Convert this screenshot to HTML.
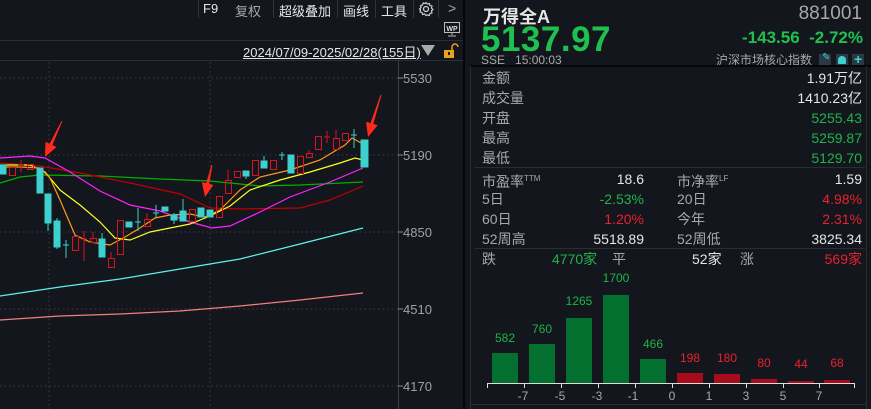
<!DOCTYPE html>
<html><head><meta charset="utf-8"><style>
*{margin:0;padding:0;box-sizing:border-box}
body{width:871px;height:409px;background:#13161c;overflow:hidden;position:relative;font-family:"Liberation Sans","Noto Sans CJK SC",sans-serif;color:#c8c8c8}
.a{position:absolute;white-space:nowrap}
.g{color:#1fb34a}.r{color:#e8212e}.w{color:#e6e6e6}.gr{color:#a8a8a8}
.row{position:absolute;left:482px;width:380px;height:20px;font-size:14px;line-height:20px}
.row span{position:absolute}
</style></head><body>
<!-- top menu -->
<div class="a" style="left:198px;top:0;width:1px;height:18px;background:#333"></div>
<div class="a w" style="left:203px;top:1px;font-size:13px">F9</div>
<div class="a gr" style="left:235px;top:1px;font-size:13px">复权</div>
<div class="a" style="left:273px;top:0;width:1px;height:18px;background:#333"></div>
<div class="a w" style="left:279px;top:1px;font-size:13px">超级叠加</div>
<div class="a" style="left:337px;top:0;width:1px;height:18px;background:#333"></div>
<div class="a w" style="left:343px;top:1px;font-size:13px">画线</div>
<div class="a" style="left:375px;top:0;width:1px;height:18px;background:#333"></div>
<div class="a w" style="left:381px;top:1px;font-size:13px">工具</div>
<div class="a" style="left:413px;top:0;width:1px;height:18px;background:#333"></div>
<div class="a" style="left:438px;top:0;width:1px;height:18px;background:#333"></div>
<svg class="a" style="left:418px;top:1px" width="16" height="16" viewBox="0 0 16 16"><circle cx="8" cy="8" r="2.5" fill="none" stroke="#ccc" stroke-width="1.3"/><path d="M8 1.5l1.4 1.6 2-.6.6 2 2 .6-.6 2 1.6 1.4-1.6 1.4.6 2-2 .6-.6 2-2-.6L8 14.5l-1.4-1.6-2 .6-.6-2-2-.6.6-2L1.5 8l1.6-1.4-.6-2 2-.6.6-2 2 .6z" fill="none" stroke="#ccc" stroke-width="1.2"/></svg>
<div class="a gr" style="left:448px;top:0px;font-size:14px">&gt;</div>
<div class="a" style="left:463px;top:0;width:2px;height:409px;background:#050608"></div>
<!-- WP -->
<svg class="a" style="left:444px;top:22px" width="16" height="15"><rect x="0.5" y="0.5" width="15" height="10" fill="none" stroke="#bbb"/><text x="8" y="9" font-size="7" fill="#ddd" text-anchor="middle" font-family="Liberation Sans" font-weight="bold">WP</text><path d="M8 11v2M4 14h8" stroke="#bbb"/></svg>
<div class="a" style="left:0;top:40px;width:463px;height:1px;background:#2a2d33"></div>
<div class="a w" style="left:243px;top:42px;font-size:13px;text-decoration:underline">2024/07/09-2025/02/28(155日)</div>
<svg class="a" style="left:421px;top:45px" width="14" height="11"><path d="M0 0h14L7 11z" fill="#aaa"/></svg>
<svg class="a" style="left:443px;top:43px" width="16" height="16"><path d="M9 7V4a3 3 0 0 1 6 0" fill="none" stroke="#e8a317" stroke-width="1.5"/><rect x="1" y="7" width="10" height="8" fill="#e8a317"/><rect x="5" y="9" width="2" height="3" fill="#13161c"/></svg>
<div class="a" style="left:0;top:60px;width:463px;height:1px;background:#2a2d33"></div>
<!-- chart -->
<svg class="a" style="left:0;top:61px" width="463" height="348" viewBox="0 61 463 348">
<g stroke="#3a3d44" stroke-dasharray="1.5,3" stroke-width="1">
<line x1="0" y1="78" x2="398" y2="78"/><line x1="0" y1="155" x2="398" y2="155"/><line x1="0" y1="232" x2="398" y2="232"/><line x1="0" y1="309" x2="398" y2="309"/><line x1="0" y1="386" x2="398" y2="386"/>
<line x1="49" y1="62" x2="49" y2="409"/><line x1="210" y1="62" x2="210" y2="409"/></g>
<line x1="398.5" y1="61" x2="398.5" y2="409" stroke="#3a3d44"/>
<g stroke="#888"><line x1="398" y1="78" x2="403" y2="78"/><line x1="398" y1="155" x2="403" y2="155"/><line x1="398" y1="232" x2="403" y2="232"/><line x1="398" y1="309" x2="403" y2="309"/><line x1="398" y1="386" x2="403" y2="386"/></g>
<g fill="#a0a0a0" font-size="13" font-family="Liberation Sans"><text x="403" y="83">5530</text><text x="403" y="160">5190</text><text x="403" y="237">4850</text><text x="403" y="314">4510</text><text x="403" y="391">4170</text></g>
<!-- long MAs -->
<polyline fill="none" stroke="#f08080" stroke-width="1.2" points="0,320 60,316 120,314 180,311 240,306 300,300 363,293"/>
<polyline fill="none" stroke="#5ff0f0" stroke-width="1.2" points="0,296 60,287 120,279 180,269 240,259 300,244 363,228"/>
<polyline fill="none" stroke="#00b000" stroke-width="1.2" points="0,183 20,177 40,175 100,176 160,179 210,181 260,186 300,185 363,182"/>
<polyline fill="none" stroke="#c00000" stroke-width="1.2" points="0,163 40,166 80,173 130,183 180,194 210,208 240,209 300,208 330,200 363,186"/>
<polyline fill="none" stroke="#ff22ff" stroke-width="1.2" points="0,158 30,156 45,158 70,172 100,191 130,205 160,211 190,222 212,228 230,226 260,212 290,197 330,182 363,168"/>
<polyline fill="none" stroke="#ffff22" stroke-width="1.2" points="0,165 30,165 45,172 60,190 80,205 100,222 115,238 130,240 150,232 170,228 190,224 210,216 230,206 250,190 280,180 310,172 340,163 355,158 363,160"/>
<polyline fill="none" stroke="#ff9a1a" stroke-width="1.2" points="0,167 20,167 40,168 50,178 60,200 75,235 90,242 110,245 125,237 140,228 155,218 170,215 190,214 205,217 220,210 240,190 260,177 290,170 320,160 345,145 352,138 363,144"/>
<!-- candles -->
<g fill="#3ecfcf" stroke="#3ecfcf" stroke-width="1">
<rect x="0" y="165" width="6" height="9"/><rect x="37" y="168" width="6" height="25"/><rect x="45" y="194" width="6" height="29"/><line x1="48" y1="223" x2="48" y2="231"/>
<rect x="54" y="221" width="6" height="26"/><line x1="57" y1="218" x2="57" y2="249"/>
<line x1="63" y1="245" x2="69" y2="245"/><line x1="66" y1="240" x2="66" y2="258"/>
<rect x="99" y="239" width="6" height="18"/><line x1="102" y1="233" x2="102" y2="239"/>
<rect x="126" y="222" width="6" height="5"/><line x1="135" y1="222" x2="141" y2="222"/><line x1="138" y1="208" x2="138" y2="231"/>
<line x1="153" y1="213" x2="159" y2="213"/><line x1="156" y1="205" x2="156" y2="217"/>
<rect x="162" y="207" width="6" height="4"/><rect x="171" y="215" width="6" height="5"/><line x1="174" y1="213" x2="174" y2="224"/>
<rect x="180" y="211" width="6" height="10"/><line x1="183" y1="199" x2="183" y2="221"/>
<rect x="198" y="208" width="6" height="9"/><rect x="207" y="210" width="6" height="7"/>
<rect x="243" y="171" width="6" height="5"/><line x1="246" y1="176" x2="246" y2="179"/>
<rect x="261" y="161" width="6" height="7"/><line x1="264" y1="156" x2="264" y2="161"/>
<rect x="288" y="155" width="6" height="18"/><line x1="279" y1="155" x2="285" y2="155"/><line x1="282" y1="152" x2="282" y2="160"/>
<line x1="351" y1="135" x2="357" y2="135"/><line x1="354" y1="129" x2="354" y2="148"/>
<rect x="361" y="140" width="7" height="27"/></g>
<g fill="none" stroke="#d8141e" stroke-width="1">
<rect x="9.5" y="167.5" width="6" height="8"/><line x1="21" y1="160" x2="21" y2="172"/><line x1="18" y1="165" x2="24" y2="165"/>
<rect x="27.5" y="164.5" width="6" height="5"/>
<rect x="72.5" y="236.5" width="6" height="14"/><line x1="84" y1="231" x2="84" y2="261"/><line x1="81" y1="239" x2="87" y2="239"/>
<rect x="90.5" y="238.5" width="6" height="4"/><line x1="93" y1="232" x2="93" y2="238"/>
<rect x="108.5" y="258.5" width="6" height="9"/><line x1="111" y1="252" x2="111" y2="258"/>
<rect x="117.5" y="220.5" width="6" height="34"/>
<rect x="144.5" y="219.5" width="6" height="7"/><line x1="147" y1="213" x2="147" y2="219"/>
<rect x="189.5" y="209.5" width="6" height="12"/>
<rect x="216.5" y="196.5" width="6" height="21"/>
<rect x="225.5" y="180.5" width="6" height="13"/><line x1="228" y1="170" x2="228" y2="180"/>
<rect x="234.5" y="171.5" width="6" height="6"/>
<rect x="252.5" y="160.5" width="6" height="15"/>
<rect x="270.5" y="160.5" width="6" height="9"/>
<rect x="297.5" y="156.5" width="6" height="17"/>
<rect x="306.5" y="153.5" width="6" height="4"/><line x1="309" y1="150" x2="309" y2="153"/>
<rect x="315.5" y="136.5" width="6" height="13"/><line x1="327" y1="131" x2="327" y2="143"/><line x1="324" y1="137" x2="330" y2="137"/>
<rect x="333.5" y="138.5" width="6" height="11"/><line x1="336" y1="130" x2="336" y2="138"/>
<rect x="342.5" y="133.5" width="6" height="7"/></g>
<!-- arrows -->
<g fill="#ff2a1a">
<polygon points="62.5,121 52.4,145 56.5,147 45,157 45.5,141.7 49.6,143.7 61.5,121"/>
<polygon points="212.5,165 209.1,183.9 213.4,185 205,197 201.8,182 206.1,183.1 211.5,165"/>
<polygon points="381.5,95 373.3,123.9 377.7,125.2 368,137 366.1,121.8 370.5,123.1 380.5,95"/></g>
</svg>
<!-- right panel -->
<div class="a w" style="left:483px;top:3px;font-size:18px;font-weight:bold">万得全A</div>
<div class="a gr" style="left:790px;top:3px;font-size:19px;width:72px;text-align:right">881001</div>
<div class="a" style="left:481px;top:22px;font-size:35px;line-height:35px;font-weight:bold;color:#20c050;letter-spacing:0.5px">5137.97</div>
<div class="a" style="left:690px;top:28px;width:173px;text-align:right;font-size:17px;font-weight:bold;color:#20c050">-143.56&nbsp; -2.72%</div>
<div class="a gr" style="left:481px;top:53px;font-size:12px">SSE&nbsp;&nbsp; 15:00:03</div>
<div class="a gr" style="left:716px;top:52px;font-size:12px;line-height:16px">沪深市场核心指数</div>
<div class="a" style="left:819px;top:54px;width:12px;height:12px;background:#2a3a44"></div>
<div class="a" style="left:836px;top:54px;width:12px;height:12px;background:#2a3a44"></div>
<div class="a" style="left:852px;top:54px;width:12px;height:12px;background:#2a3a44"></div>
<div class="a" style="left:822px;top:52px;font-size:10px;color:#3ecfcf">✎</div>
<div class="a" style="left:838px;top:56px;width:8px;height:8px;background:#3ecfcf;border-radius:4px 4px 1px 1px"></div>
<div class="a" style="left:854px;top:51px;font-size:14px;font-weight:bold;color:#3ecfcf">+</div>
<div class="a" style="left:470px;top:65px;width:401px;height:2px;background:#050608"></div>
<div class="a" style="left:866px;top:66px;width:1px;height:343px;background:#2a2d33"></div>
<div class="a" style="left:470px;top:66px;width:1px;height:343px;background:#2a2d33"></div>
<div class="row" style="top:68px"><span class="gr">金额</span><span class="w" style="right:0">1.91万亿</span></div>
<div class="row" style="top:88px"><span class="gr">成交量</span><span class="w" style="right:0">1410.23亿</span></div>
<div class="row" style="top:108px"><span class="gr">开盘</span><span class="g" style="right:0">5255.43</span></div>
<div class="row" style="top:128px"><span class="gr">最高</span><span class="g" style="right:0">5259.87</span></div>
<div class="row" style="top:148px"><span class="gr">最低</span><span class="g" style="right:0">5129.70</span></div>
<div class="a" style="left:475px;top:167px;width:390px;height:1px;background:#2a2d33"></div>
<div class="row" style="top:169px"><span class="gr">市盈率<sup style="font-size:8px">TTM</sup></span><span class="w" style="right:218px">18.6</span><span class="gr" style="left:195px">市净率<sup style="font-size:8px">LF</sup></span><span class="w" style="right:0">1.59</span></div>
<div class="row" style="top:189px"><span class="gr">5日</span><span class="g" style="right:218px">-2.53%</span><span class="gr" style="left:195px">20日</span><span class="r" style="right:0">4.98%</span></div>
<div class="row" style="top:209px"><span class="gr">60日</span><span class="r" style="right:218px">1.20%</span><span class="gr" style="left:195px">今年</span><span class="r" style="right:0">2.31%</span></div>
<div class="row" style="top:229px"><span class="gr">52周高</span><span class="w" style="right:218px">5518.89</span><span class="gr" style="left:195px">52周低</span><span class="w" style="right:0">3825.34</span></div>
<div class="a" style="left:475px;top:248px;width:390px;height:1px;background:#2a2d33"></div>
<div class="row" style="top:249px"><span class="gr">跌</span><span class="g" style="left:70px">4770家</span><span class="gr" style="left:130px">平</span><span class="w" style="left:210px">52家</span><span class="gr" style="left:258px">涨</span><span class="r" style="right:0">569家</span></div>
<svg class="a" style="left:470px;top:260px" width="401" height="149" viewBox="470 260 401 149">
<g fill="#047030"><rect x="492" y="353" width="26" height="30"/><rect x="529" y="344" width="26" height="39"/><rect x="566" y="318" width="26" height="65"/><rect x="603" y="295" width="26" height="88"/><rect x="640" y="359" width="26" height="24"/></g>
<g fill="#a80c1c"><rect x="677" y="373" width="26" height="10"/><rect x="714" y="374" width="26" height="9"/><rect x="751" y="379" width="26" height="4"/><rect x="788" y="381" width="26" height="2"/><rect x="824" y="380" width="26" height="3"/></g>
<g font-size="12" font-family="Liberation Sans" text-anchor="middle" fill="#1fb34a"><text x="505" y="342">582</text><text x="542" y="333">760</text><text x="579" y="305">1265</text><text x="616" y="282">1700</text><text x="653" y="348">466</text></g>
<g font-size="12" font-family="Liberation Sans" text-anchor="middle" fill="#e8212e"><text x="690" y="362">198</text><text x="727" y="362">180</text><text x="764" y="367">80</text><text x="801" y="368">44</text><text x="837" y="367">68</text></g>
<line x1="487" y1="383.5" x2="855" y2="383.5" stroke="#ddd"/>
<g stroke="#ddd"><line x1="487.5" y1="383" x2="487.5" y2="388"/><line x1="524.5" y1="383" x2="524.5" y2="388"/><line x1="561.5" y1="383" x2="561.5" y2="388"/><line x1="598.5" y1="383" x2="598.5" y2="388"/><line x1="635.5" y1="383" x2="635.5" y2="388"/><line x1="672.5" y1="383" x2="672.5" y2="388"/><line x1="709.5" y1="383" x2="709.5" y2="388"/><line x1="746.5" y1="383" x2="746.5" y2="388"/><line x1="783.5" y1="383" x2="783.5" y2="388"/><line x1="819.5" y1="383" x2="819.5" y2="388"/><line x1="854.5" y1="383" x2="854.5" y2="388"/></g>
<g font-size="12" font-family="Liberation Sans" text-anchor="middle" fill="#a8a8a8"><text x="523" y="400">-7</text><text x="560" y="400">-5</text><text x="597" y="400">-3</text><text x="633" y="400">-1</text><text x="672" y="400">0</text><text x="709" y="400">1</text><text x="746" y="400">3</text><text x="783" y="400">5</text><text x="819" y="400">7</text></g>
<line x1="470" y1="404.5" x2="866" y2="404.5" stroke="#2a2d33"/>
</svg>
</body></html>
